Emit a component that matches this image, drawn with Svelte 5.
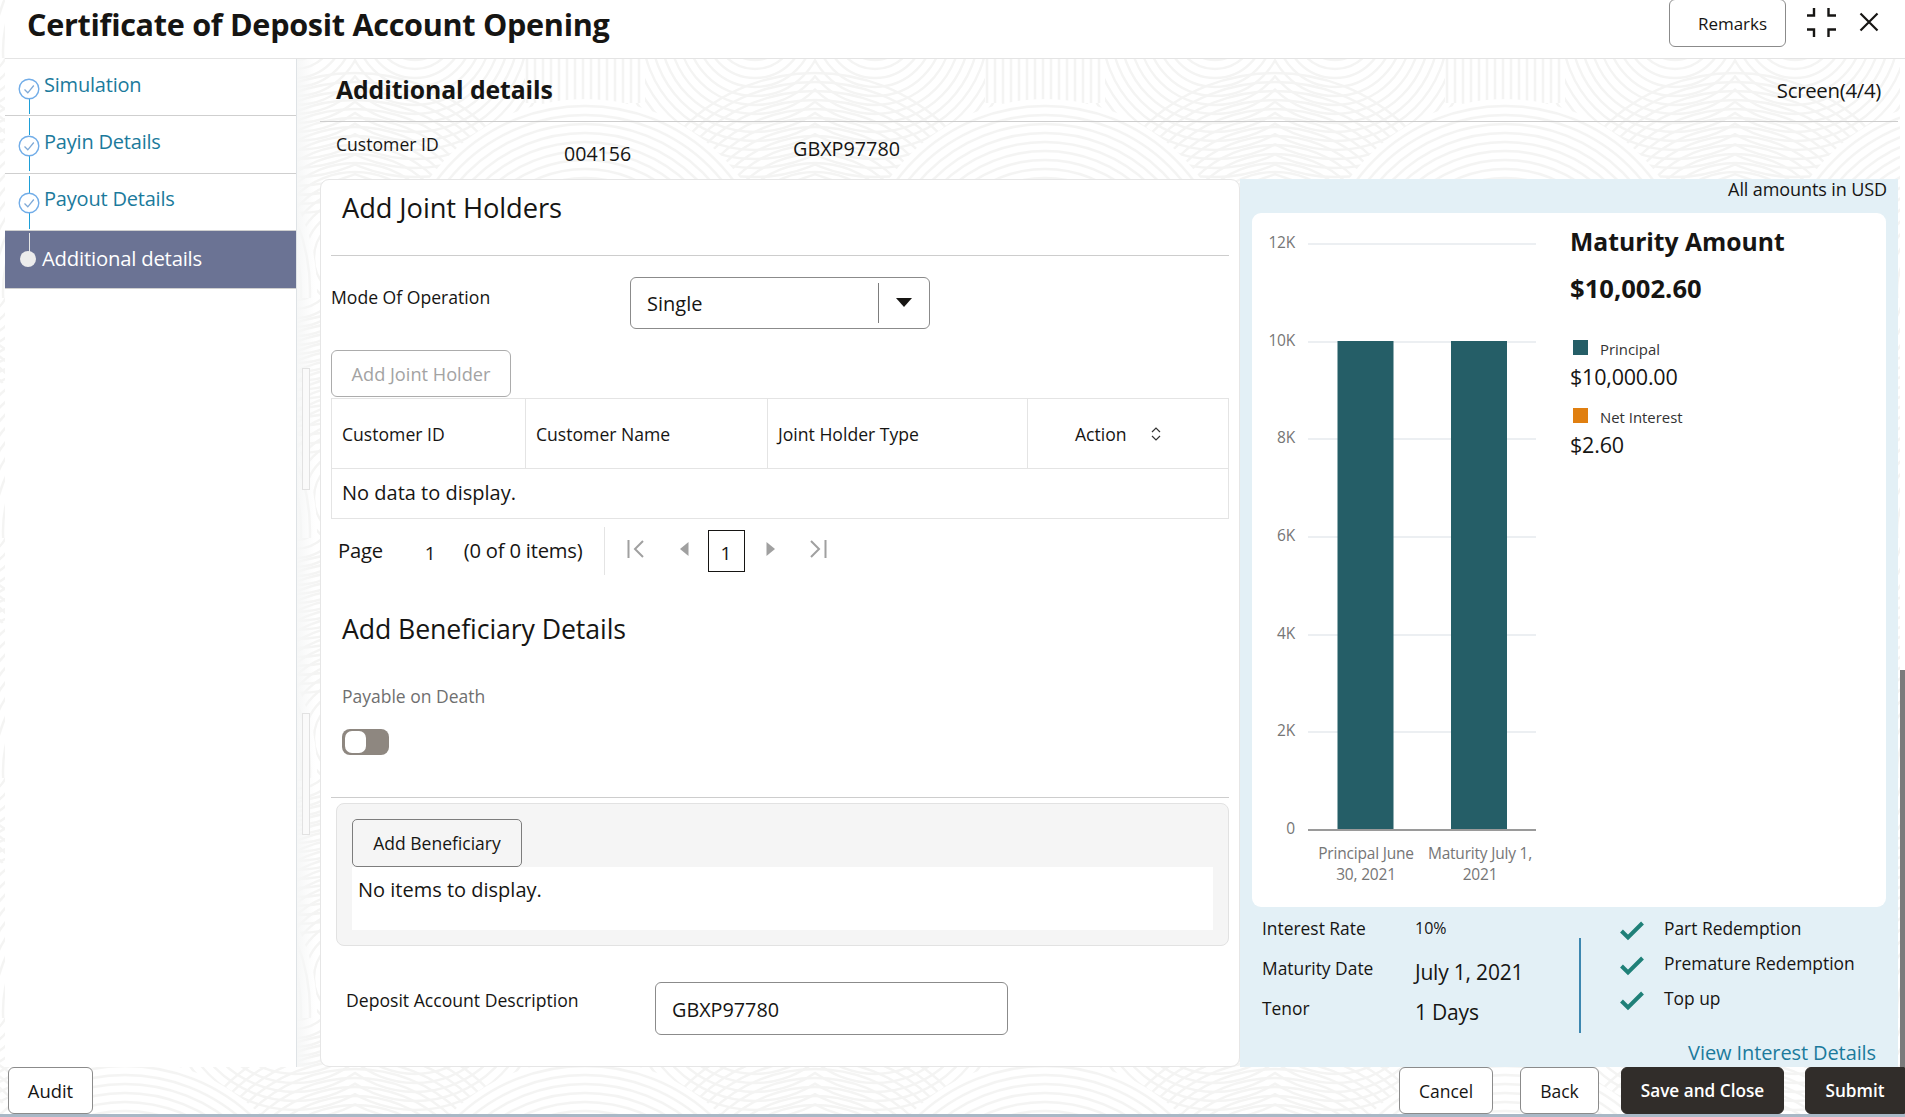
<script>
  const steps = [
    { label: 'Simulation', done: true },
    { label: 'Payin Details', done: true },
    { label: 'Payout Details', done: true },
    { label: 'Additional details', done: false }
  ];
  const ticks = [
    { t: '12K', y: 31 }, { t: '10K', y: 129 }, { t: '8K', y: 226 },
    { t: '6K', y: 324 }, { t: '4K', y: 422 }, { t: '2K', y: 519 }
  ];
  const rings = Array.from({ length: 20 }, (_, i) => 14 + i * 9);
  const stripes = Array.from({ length: 15 }, (_, i) => 172 + i * 8);
  const columns = ['Customer ID', 'Customer Name', 'Joint Holder Type'];
  const features = ['Part Redemption', 'Premature Redemption', 'Top up'];
</script>

<div class="app">
  <svg class="texture" width="1900" height="1117" aria-hidden="true">
    <defs>
      <pattern id="prints" x="-105" y="58" width="460" height="240" patternUnits="userSpaceOnUse">
        {#each rings as r}
          <circle cx="60" cy="-30" {r} />
          <circle cx="400" cy="-30" {r} />
          <circle cx="0" cy="200" {r} />
          <circle cx="460" cy="200" {r} />
        {/each}
        <rect x="170" y="0" width="120" height="45" fill="#fff" />
        {#each stripes as x}
          <line x1={x} x2={x} y1="0" y2="45" />
        {/each}
        <circle class="disc" cx="230" cy="233" r="192" />
        {#each rings as r}
          <circle cx="230" cy="233" {r} />
        {/each}
      </pattern>
    </defs>
    <rect width="1900" height="1117" fill="url(#prints)" />
  </svg>

  <header class="top">
    <h1>Certificate of Deposit Account Opening</h1>
    <div class="top-actions">
      <button class="btn remarks">Remarks</button>
      <svg class="compress" width="30" height="32" viewBox="0 0 30 32" fill="none" stroke="#161513" stroke-width="2.4">
        <path d="M1 9.5H8V2M22.5 2V9.5H30M1 23.5H8V31M30 23.5H22.5V31" />
      </svg>
      <svg class="close" width="20" height="20" viewBox="0 0 20 20" fill="none" stroke="#161513" stroke-width="2.2">
        <path d="M1.5 1.5L18.5 18.5M18.5 1.5L1.5 18.5" />
      </svg>
    </div>
  </header>

  <div class="body">
    <nav class="side">
      {#each steps as s, i}
        <div class="step" class:active={!s.done}>
          {#if i > 0}<span class="wire up"></span>{/if}
          {#if i < steps.length - 1}<span class="wire down"></span>{/if}
          {#if s.done}
            <svg class="tick" width="22" height="22" viewBox="0 0 22 22" fill="#fff">
              <circle cx="11" cy="11" r="9.8" stroke="#72ade8" stroke-width="1.4" />
              <path d="M6.5 11.5L9.8 14.8L15.8 7.5" fill="none" stroke="#7fa9d6" stroke-width="1.3" />
            </svg>
          {:else}
            <span class="dot"></span>
          {/if}
          <span class="step-label">{s.label}</span>
        </div>
      {/each}
    </nav>

    <main class="main">
      <div class="page-head">
        <h2>Additional details</h2>
        <span class="screen">Screen(4/4)</span>
      </div>
      <div class="cust">
        <span class="cust-label">Customer ID</span>
        <span class="cust-num">004156</span>
        <span class="cust-code">GBXP97780</span>
      </div>

      <div class="split">
        <section class="form-card">
          <span class="rail one"></span>
          <span class="rail two"></span>
          <h3 class="joint-title">Add Joint Holders</h3>
          <div class="rule"></div>
          <div class="mode">
            <span class="field-label">Mode Of Operation</span>
            <div class="select">
              <span class="select-value">Single</span>
              <span class="select-arrow">
                <svg width="16" height="9" viewBox="0 0 16 9"><path d="M0 0H16L8 9Z" fill="#161513" /></svg>
              </span>
            </div>
          </div>
          <button class="btn add-joint" disabled>Add Joint Holder</button>
          <div class="table">
            <div class="thead">
              {#each columns as c}
                <div class="th">{c}</div>
              {/each}
              <div class="th action">
                Action
                <svg width="12" height="16" viewBox="0 0 12 16" fill="none" stroke="#333" stroke-width="1.2">
                  <path d="M2 6L6 2L10 6M2 10L6 14L10 10" />
                </svg>
              </div>
            </div>
            <div class="tbody">No data to display.</div>
          </div>
          <div class="pager">
            <span class="pg-text">Page</span>
            <span class="pg-cur">1</span>
            <span class="pg-text">(0 of 0 items)</span>
            <span class="pg-sep"></span>
            <svg class="pg-first" width="17" height="18" viewBox="0 0 17 18" fill="none" stroke="#a0a0a0" stroke-width="2">
              <path d="M1.5 0V18M16 1L8 9L16 17" />
            </svg>
            <svg class="pg-prev" width="9" height="14" viewBox="0 0 9 14"><path d="M8.5 0V14L0 7Z" fill="#a0a0a0" /></svg>
            <span class="pg-box">1</span>
            <svg class="pg-next" width="9" height="14" viewBox="0 0 9 14"><path d="M0.5 0V14L9 7Z" fill="#a0a0a0" /></svg>
            <svg class="pg-last" width="17" height="18" viewBox="0 0 17 18" fill="none" stroke="#a0a0a0" stroke-width="2">
              <path d="M15.5 0V18M1 1L9 9L1 17" />
            </svg>
          </div>

          <h3 class="benef-title">Add Beneficiary Details</h3>
          <div class="pod">Payable on Death</div>
          <div class="toggle"><span class="knob"></span></div>
          <div class="rule lower"></div>
          <div class="benef-box">
            <button class="btn add-benef">Add Beneficiary</button>
            <div class="benef-empty">No items to display.</div>
          </div>
          <div class="desc">
            <span class="desc-label">Deposit Account Description</span>
            <div class="input">GBXP97780</div>
          </div>
        </section>

        <aside class="summary">
          <div class="amounts-note">All amounts in USD</div>
          <div class="chart-card">
            <svg class="chart" width="310" height="694" viewBox="0 0 310 694">
              {#each ticks as t}
                <text class="axis" x="43" y={t.y + 4} text-anchor="end">{t.t}</text>
                <line x1="56" x2="284" y1={t.y} y2={t.y} stroke="#e6eaee" stroke-width="1.6" />
              {/each}
              <text class="axis" x="43" y="621" text-anchor="end">0</text>
              <rect x="85.5" y="128" width="56" height="488" fill="#255e67" />
              <rect x="199" y="128" width="56" height="488" fill="#255e67" />
              <line x1="56" x2="284" y1="617" y2="617" stroke="#9a9a9a" stroke-width="2" />
              <text class="axis" x="114" y="646" text-anchor="middle">Principal June</text>
              <text class="axis" x="114" y="667" text-anchor="middle">30, 2021</text>
              <text class="axis" x="228" y="646" text-anchor="middle">Maturity July 1,</text>
              <text class="axis" x="228" y="667" text-anchor="middle">2021</text>
            </svg>
            <div class="legend">
              <div class="mat-title">Maturity Amount</div>
              <div class="mat-value">$10,002.60</div>
              <div class="lg-row first"><span class="swatch teal"></span>Principal</div>
              <div class="lg-value">$10,000.00</div>
              <div class="lg-row second"><span class="swatch orange"></span>Net Interest</div>
              <div class="lg-value">$2.60</div>
            </div>
          </div>
          <div class="facts">
            <div class="fact-grid">
              <span class="fact-key">Interest Rate</span><span class="fact-rate">10%</span>
              <span class="fact-key">Maturity Date</span><span class="fact-val">July 1, 2021</span>
              <span class="fact-key">Tenor</span><span class="fact-val">1 Days</span>
            </div>
            <span class="fact-sep"></span>
            <ul class="features">
              {#each features as f}
                <li>
                  <svg width="24" height="20" viewBox="0 0 24 20" fill="none" stroke="#1f8078" stroke-width="4">
                    <path d="M1.5 10L8 16.5L22.5 2" />
                  </svg>
                  <span>{f}</span>
                </li>
              {/each}
            </ul>
          </div>
          <div class="view-link">View Interest Details</div>
        </aside>
      </div>
    </main>
  </div>

  <footer class="foot">
    <button class="btn audit">Audit</button>
    <div class="foot-right">
      <button class="btn cancel">Cancel</button>
      <button class="btn back">Back</button>
      <button class="btn dark save">Save and Close</button>
      <button class="btn dark submit">Submit</button>
    </div>
  </footer>
  <span class="scrollthumb"></span>
</div>

<style>
  :global(body) {
    margin: 0;
    background: #fff;
  }
  .app {
    position: relative;
    width: 1905px;
    height: 1117px;
    overflow: hidden;
    display: flex;
    flex-direction: column;
    font-family: "Open Sans", "Noto Sans", sans-serif;
    color: #161513;
    background: #fff;
  }
  .texture {
    position: absolute;
    left: 0;
    top: 0;
  }
  .texture circle {
    fill: none;
    stroke: #f4f4f3;
    stroke-width: 2.4;
  }
  .texture circle.disc {
    fill: #fff;
    stroke: none;
  }
  .texture line {
    stroke: #f4f4f3;
    stroke-width: 2.4;
  }
  h1, h2, h3 {
    margin: 0;
  }
  .btn {
    box-sizing: border-box;
    font-family: inherit;
    font-size: 17.5px;
    font-weight: 400;
    color: #161513;
    background: #fff;
    border: 1px solid #8b8b8b;
    border-radius: 6px;
    padding: 0;
  }

  /* top bar */
  .top {
    position: relative;
    box-sizing: border-box;
    height: 59px;
    margin-left: 5px;
    padding-left: 22px;
    display: flex;
    justify-content: space-between;
    align-items: flex-start;
    background: #fff;
    border-bottom: 1px solid #e4e4e4;
  }
  .top h1 {
    font-size: 30.6px;
    font-weight: 700;
    line-height: 48px;
    letter-spacing: -0.3px;
  }
  .top-actions {
    display: flex;
    align-items: flex-start;
  }
  .remarks {
    width: 117px;
    height: 48px;
    margin-top: -1px;
    padding-left: 10px;
    font-size: 17px;
  }
  .compress {
    margin: 6px 0 0 20px;
  }
  .close {
    margin: 12px 26px 0 23px;
  }

  /* body */
  .body {
    position: relative;
    display: flex;
    height: 1008px;
  }
  .side {
    box-sizing: border-box;
    width: 292px;
    margin-left: 5px;
    background: #fff;
    border-right: 1px solid #dfe3e6;
    font-size: 20px;
    color: #1b7a9c;
  }
  .step {
    position: relative;
    box-sizing: border-box;
    height: 57.4px;
    display: flex;
    align-items: center;
    border-bottom: 1px solid #cfcfcf;
    padding-left: 13px;
    letter-spacing: -0.2px;
  }
  .step.active {
    background: #6b7394;
    color: #fff;
    padding-left: 15px;
    font-size: 20.3px;
  }
  .tick {
    flex: none;
    margin-top: 3px;
    margin-right: 4px;
    position: relative;
  }
  .step-label {
    margin-top: -6px;
  }
  .step.active .step-label {
    margin-top: -2px;
  }
  .dot {
    flex: none;
    position: relative;
    width: 16px;
    height: 16px;
    border-radius: 50%;
    background: #ececec;
    margin-right: 6px;
  }
  .wire {
    position: absolute;
    left: 24px;
    width: 1px;
    background: #1d9fd8;
  }
  .wire.down {
    top: 39px;
    height: 16px;
  }
  .wire.up {
    top: 2px;
    height: 17px;
  }
  .active .wire.up {
    background: #e6e6e6;
    height: 19px;
  }

  .main {
    flex: 1;
    min-width: 0;
    box-sizing: border-box;
    padding: 0 7px 0 23px;
    background: linear-gradient(90deg, #f6f7f7, rgba(255, 255, 255, 0) 18px);
  }
  .page-head {
    box-sizing: border-box;
    height: 63px;
    padding: 0 17px 0 16px;
    display: flex;
    justify-content: space-between;
    align-items: center;
    border-bottom: 1px solid #cdcdcd;
  }
  .page-head h2 {
    font-size: 24.8px;
    font-weight: 700;
    letter-spacing: -0.1px;
    margin-top: -3px;
  }
  .screen {
    font-size: 20.4px;
    letter-spacing: -0.3px;
  }
  .cust {
    height: 57px;
    display: grid;
    grid-template-columns: 228px 229px auto;
    padding-left: 16px;
    align-items: start;
  }
  .cust-label {
    font-size: 17.6px;
    margin-top: 10px;
  }
  .cust-num {
    font-size: 19.6px;
    margin-top: 18px;
  }
  .cust-code {
    font-size: 19.8px;
    margin-top: 13px;
  }

  .split {
    display: flex;
    height: 888px;
  }
  .form-card {
    position: relative;
    box-sizing: border-box;
    width: 920px;
    height: 888px;
    background: #fff;
    border: 1px solid #e6e6e6;
    border-radius: 9px;
    padding: 0 10px 0 10px;
  }
  .rail {
    position: absolute;
    left: -19px;
    width: 8px;
    box-sizing: border-box;
    border: 1px solid #e2e2e2;
    background: #fafafa;
  }
  .rail.one {
    top: 188px;
    height: 122px;
  }
  .rail.two {
    top: 533px;
    height: 122px;
  }
  .form-card h3 {
    font-weight: 500;
    padding-left: 11px;
    letter-spacing: -0.1px;
  }
  .joint-title {
    height: 75px;
    line-height: 56px;
    font-size: 27.3px;
  }
  .rule {
    height: 1px;
    background: #cdcdcd;
  }
  .rule.lower {
    margin-top: 42px;
  }
  .mode {
    display: flex;
    margin-top: 21px;
    height: 52px;
  }
  .field-label {
    width: 299px;
    font-size: 17.6px;
    line-height: 41px;
  }
  .select {
    box-sizing: border-box;
    width: 300px;
    height: 52px;
    border: 1px solid #8b8b8b;
    border-radius: 6px;
    display: flex;
    align-items: center;
    background: #fff;
  }
  .select-value {
    flex: 1;
    font-size: 20px;
    padding: 0 0 0 16px;
  }
  .select-arrow {
    box-sizing: border-box;
    width: 51px;
    height: 40px;
    border-left: 1px solid #7d7d7d;
    display: flex;
    align-items: center;
    justify-content: center;
    padding: 0 1px 2px 0;
  }
  .add-joint {
    display: block;
    width: 180px;
    height: 47px;
    margin-top: 21px;
    color: #a3a3a3;
    border-color: #acacac;
    font-size: 18.2px;
  }
  .table {
    margin-top: 1px;
    box-sizing: border-box;
    height: 120.5px;
    border: 1px solid #e4e4e4;
  }
  .thead {
    display: grid;
    grid-template-columns: 194px 242px 260px 1fr;
    height: 69px;
    border-bottom: 1px solid #e4e4e4;
  }
  .th {
    box-sizing: border-box;
    display: flex;
    align-items: center;
    padding-left: 10px;
    font-size: 17.6px;
    font-weight: 500;
    border-right: 1px solid #e4e4e4;
  }
  .th.action {
    border-right: 0;
    padding-left: 47px;
    gap: 23px;
  }
  .tbody {
    padding-left: 10px;
    font-size: 20px;
    line-height: 48px;
  }
  .pager {
    display: flex;
    align-items: center;
    height: 48px;
    margin-top: 8px;
    padding-left: 7px;
    position: relative;
  }
  .pg-text {
    font-size: 20.2px;
    letter-spacing: -0.2px;
    margin-top: -2px;
  }
  .pg-cur {
    font-size: 19px;
    margin: 4px 28px 0 42px;
  }
  .pg-sep {
    width: 1px;
    height: 48px;
    background: #e4e4e4;
    margin: 0 22px 0 21px;
  }
  .pg-first, .pg-prev, .pg-next, .pg-last {
    flex: none;
    margin-top: -3px;
  }
  .pg-prev {
    margin-left: 36px;
  }
  .pg-box {
    box-sizing: border-box;
    width: 37px;
    height: 42px;
    margin: 1px 0 0 19px;
    border: 1px solid #161513;
    display: flex;
    align-items: center;
    justify-content: center;
    font-size: 19px;
    padding-top: 4px;
  }
  .pg-next {
    margin-left: 21px;
  }
  .pg-last {
    margin-left: 35px;
  }
  .benef-title {
    margin-top: 31px;
    line-height: 46px;
    font-size: 26.7px;
  }
  .pod {
    margin: 31.5px 0 0 11px;
    font-size: 17.5px;
    color: #6f6f6f;
    line-height: 26px;
  }
  .toggle {
    box-sizing: border-box;
    margin: 20px 0 0 11px;
    width: 47px;
    height: 26px;
    background: #8e8780;
    border-radius: 8px;
    padding: 2px 3px;
  }
  .knob {
    display: block;
    width: 21px;
    height: 22px;
    background: #fff;
    border-radius: 7px;
  }
  .benef-box {
    box-sizing: border-box;
    margin: 5px 0 0 5px;
    height: 143px;
    background: #f5f5f5;
    border: 1px solid #e2e2e2;
    border-radius: 8px;
    padding: 15px 15px 0 15px;
  }
  .add-benef {
    display: block;
    width: 170px;
    height: 48px;
    background: #f5f5f5;
    border-color: #7d7d7d;
    font-weight: 500;
    border-radius: 5px;
  }
  .benef-empty {
    height: 63px;
    background: #fff;
    padding-left: 6px;
    font-size: 20px;
    line-height: 45px;
  }
  .desc {
    display: flex;
    margin-top: 36px;
    padding-left: 15px;
  }
  .desc-label {
    width: 309px;
    font-size: 17.6px;
    font-weight: 500;
    line-height: 37px;
  }
  .input {
    box-sizing: border-box;
    width: 353px;
    height: 53px;
    padding: 4px 0 0 16px;
    border: 1px solid #8b8b8b;
    border-radius: 6px;
    font-size: 19.8px;
    line-height: 45px;
    background: #fff;
  }

  /* summary */
  .summary {
    box-sizing: border-box;
    width: 658px;
    height: 888px;
    background: #e3f0f6;
    padding-left: 12px;
    position: relative;
  }
  .amounts-note {
    height: 34px;
    padding-right: 11px;
    text-align: right;
    font-size: 18px;
    line-height: 16px;
    padding-top: 2px;
    box-sizing: border-box;
    letter-spacing: -0.1px;
  }
  .chart-card {
    box-sizing: border-box;
    width: 634px;
    height: 694px;
    background: #fff;
    border-radius: 9px;
    display: flex;
  }
  .chart {
    flex: none;
    display: block;
  }
  .axis {
    font-size: 15.5px;
    fill: #767676;
    letter-spacing: -0.2px;
  }
  .legend {
    padding: 12px 0 0 8px;
  }
  .mat-title {
    font-size: 24.7px;
    font-weight: 700;
    line-height: 34px;
  }
  .mat-value {
    font-size: 25.6px;
    font-weight: 700;
    line-height: 34px;
    margin-top: 13px;
  }
  .lg-row {
    display: flex;
    align-items: flex-start;
    padding-left: 3px;
    font-size: 14.9px;
    color: #333;
    line-height: 22px;
  }
  .lg-row.first {
    margin-top: 32px;
  }
  .lg-row.second {
    margin-top: 14px;
  }
  .swatch {
    width: 15px;
    height: 15px;
    margin: 2px 12px 0 0;
  }
  .teal { background: #255e67; }
  .orange { background: #e07f10; }
  .lg-value {
    font-size: 21.5px;
    line-height: 30px;
    margin-top: 2px;
    letter-spacing: -0.2px;
  }

  .facts {
    display: flex;
    padding: 6px 0 0 10px;
    height: 133px;
    box-sizing: border-box;
  }
  .fact-grid {
    display: grid;
    grid-template-columns: 153px 164px;
    grid-auto-rows: 40px;
    align-content: start;
  }
  .fact-key {
    font-size: 17.4px;
    line-height: 30px;
  }
  .fact-rate {
    font-size: 16px;
    font-weight: 500;
    line-height: 30px;
  }
  .fact-val {
    font-size: 21px;
    line-height: 30px;
    padding-top: 4px;
    letter-spacing: -0.2px;
  }
  .fact-sep {
    flex: none;
    width: 2px;
    height: 95px;
    background: #3d87b0;
    margin-top: 25px;
  }
  .features {
    list-style: none;
    margin: 0;
    padding: 0 0 0 39px;
  }
  .features li {
    display: flex;
    height: 35.2px;
    align-items: flex-start;
    font-size: 17.4px;
    line-height: 30px;
    gap: 20px;
  }
  .features svg {
    margin-top: 8px;
    flex: none;
  }
  .view-link {
    text-align: right;
    padding-right: 22px;
    font-size: 20px;
    line-height: 26px;
    color: #1b7a9c;
    letter-spacing: -0.1px;
  }

  /* footer */
  .foot {
    position: relative;
    box-sizing: border-box;
    height: 50px;
    padding-left: 8px;
    display: flex;
    justify-content: space-between;
    border-bottom: 3px solid #a9b8c6;
  }
  .foot .btn {
    height: 47px;
  }
  .foot-right {
    display: flex;
  }
  .audit { width: 85px; font-size: 18.4px; }
  .cancel { width: 94px; }
  .back { width: 79px; margin-left: 27px; }
  .save { width: 163px; margin-left: 22px; font-size: 17.2px; }
  .submit { width: 100px; margin-left: 21px; border-radius: 6px 0 0 6px; font-size: 17.2px; }
  .dark {
    background: #312d2a;
    border-color: #312d2a;
    color: #fff;
    font-weight: 600;
  }
  .scrollthumb {
    position: absolute;
    left: 1900px;
    top: 670px;
    width: 5px;
    height: 397px;
    background: #7b7b7b;
  }
</style>
